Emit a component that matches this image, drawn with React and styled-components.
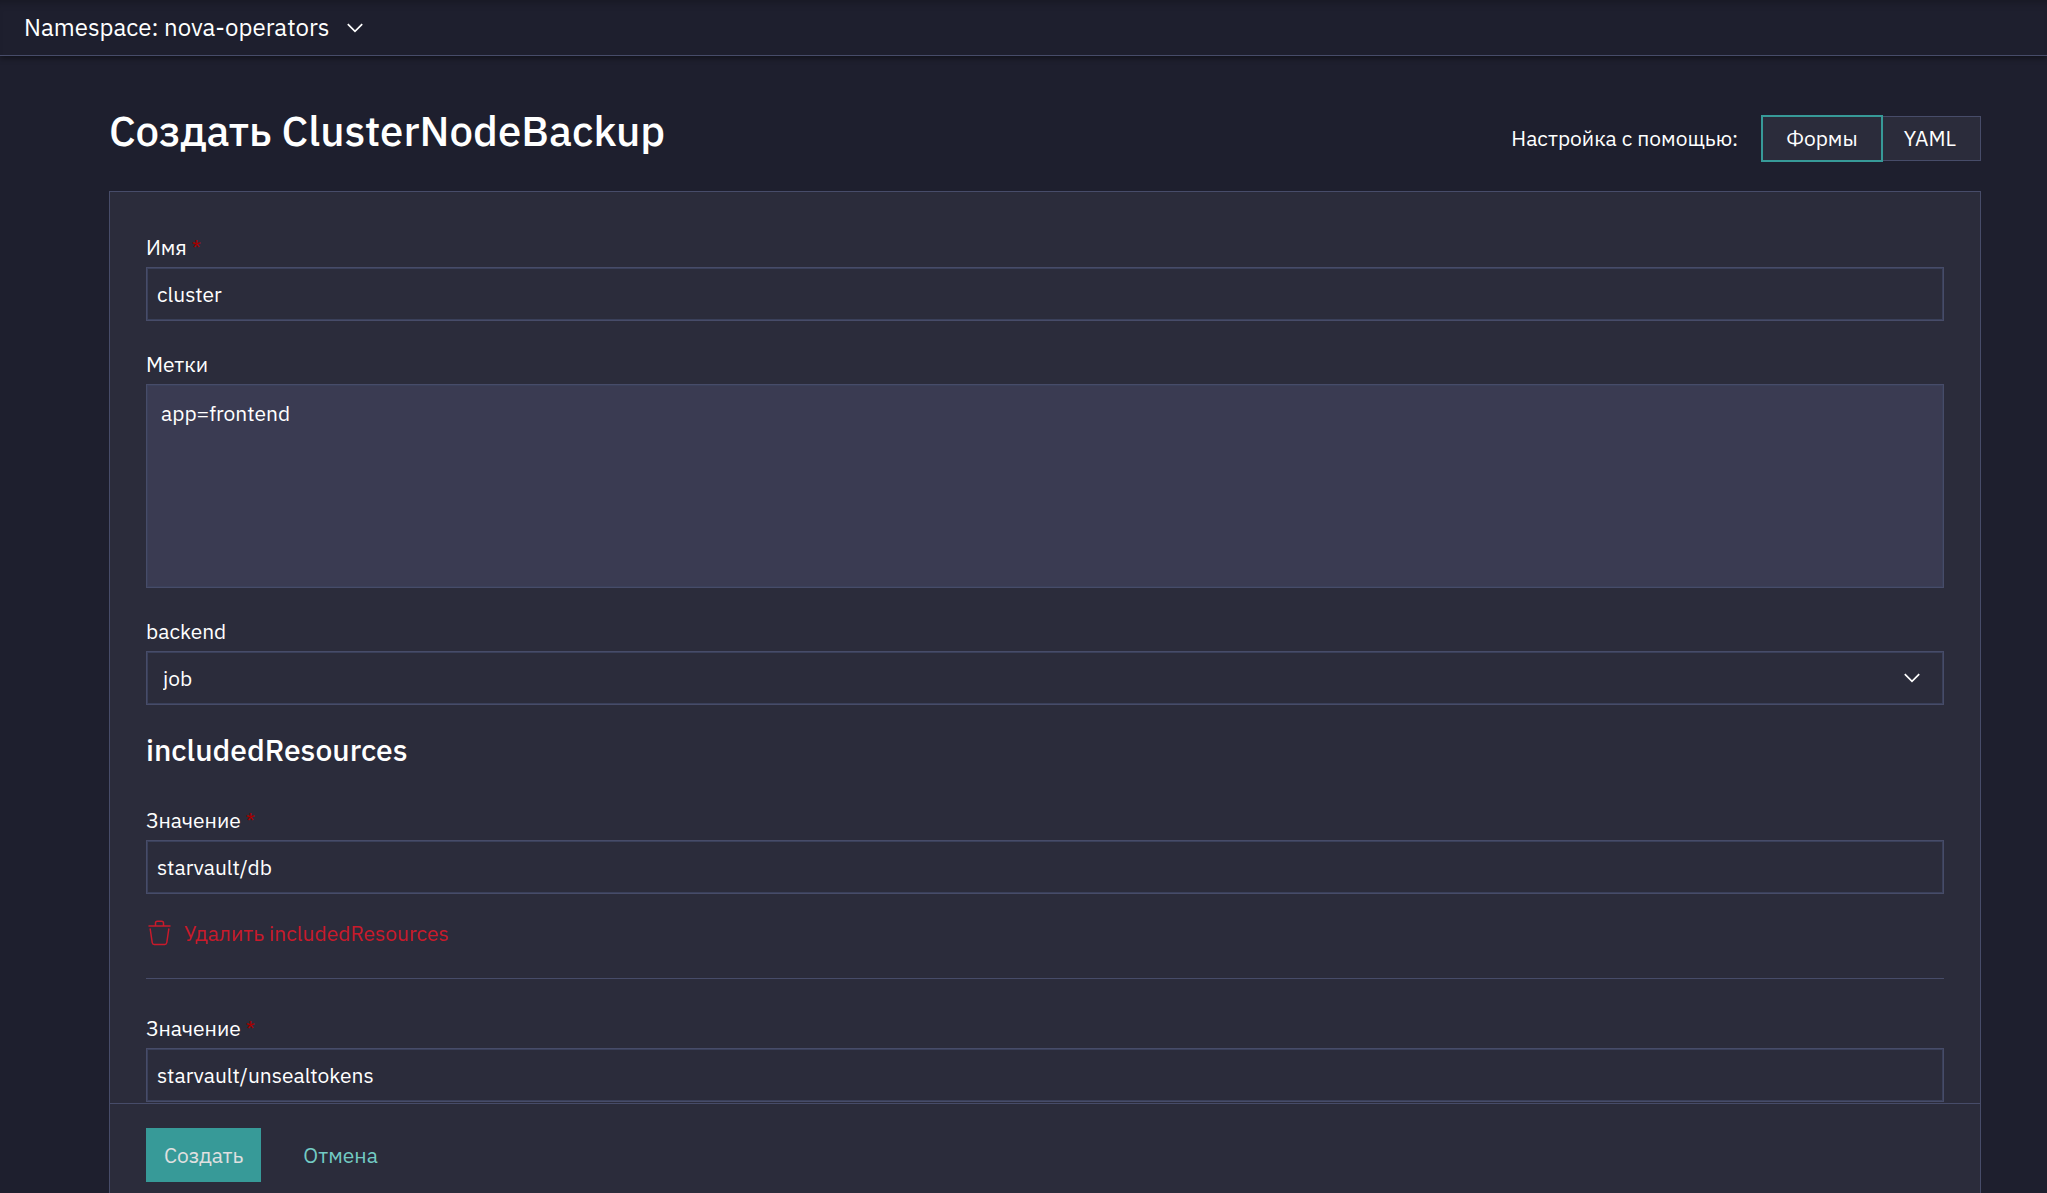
import React, { useState } from "react";
import styled, { createGlobalStyle } from "styled-components";

const color = {
  page: "#1e1f2e",
  panel: "#2b2c3b",
  field: "#3a3b52",
  border: "#474c69",
  text: "#ffffff",
  teal: "#379a98",
  link: "#73cbc4",
  danger: "#c91a2b",
  required: "#a30000",
};

const GlobalStyle = createGlobalStyle`
  *, *::before, *::after { box-sizing: border-box; }
  body {
    margin: 0;
    background: ${color.page};
    color: ${color.text};
    font: 400 21px/30px "IBM Plex Sans", Roboto, "Noto Sans", sans-serif;
  }
  button, input, select, textarea { font: inherit; color: inherit; margin: 0; border-radius: 0; }
`;

const Page = styled.div`
  display: flex;
  flex-direction: column;
  height: 100vh;
  overflow: hidden;
`;

const TopBar = styled.header`
  flex: none;
  display: flex;
  padding: 12px 24px 13px;
  border-bottom: 1px solid ${color.border};
  box-shadow: 0 2px 6px rgba(0, 0, 0, 0.45), inset 0 8px 8px -6px rgba(0, 0, 0, 0.25);
`;

const NamespaceButton = styled.button`
  display: flex;
  align-items: center;
  gap: 18px;
  padding: 0;
  border: 0;
  background: none;
  font-size: 24px;
  line-height: 30px;
  > svg { margin-top: 2px; }
`;

const Main = styled.main`
  flex: 1;
  min-height: 0;
  display: flex;
  flex-direction: column;
  padding: 48px 66px 0 109px;
`;

const TitleRow = styled.div`
  flex: none;
  display: flex;
  justify-content: space-between;
  align-items: flex-start;
  padding-bottom: 29px;
`;

const Title = styled.h1`
  margin: 0;
  font-size: 42px;
  line-height: 54px;
  font-weight: 500;
`;

const ModeSwitch = styled.div`
  display: flex;
  align-items: center;
  gap: 23px;
  padding-top: 11px;
`;

const ModeCaption = styled.span`
  padding-bottom: 2px;
`;

const ModeButtons = styled.div`
  display: flex;
  align-items: center;
`;

const ModeButton = styled.button`
  height: ${(p) => (p.$active ? 47 : 45)}px;
  padding: 0 ${(p) => (p.$active ? 23 : 24)}px 2px ${(p) => (p.$active ? 23 : 21)}px;
  background: ${color.panel};
  border: ${(p) => (p.$active ? `2px solid ${color.teal}` : `1px solid ${color.border}`)};
  ${(p) => !p.$active && "border-left: 0;"}
`;

const Panel = styled.form`
  flex: 1;
  min-height: 0;
  display: flex;
  flex-direction: column;
  background: ${color.panel};
  border: 1px solid ${color.border};
  border-bottom: 0;
`;

const Fields = styled.div`
  flex: 1;
  min-height: 0;
  overflow: hidden auto;
  padding: 40px 36px 0;
`;

const Field = styled.div`
  display: flex;
  flex-direction: column;
  gap: 5px;
  margin-bottom: ${(p) => (p.$last ? 0 : 28)}px;
`;

const Label = styled.label`
  align-self: flex-start;
`;

const Star = styled.span`
  color: ${color.required};
`;

const controlStyle = `
  width: 100%;
  background: transparent;
  border: 1px solid ${color.border};
  box-shadow: inset 0 0 0 1px #3a405a;
  outline: 0;
`;

const Input = styled.input`
  ${controlStyle}
  height: 54px;
  padding: 0 10px;
`;

const TextArea = styled.textarea`
  ${controlStyle}
  display: block;
  height: 204px;
  padding: 13px 14px;
  background: ${color.field};
  resize: none;
`;

const SelectBox = styled.div`
  display: grid;
  align-items: center;
  > * { grid-area: 1 / 1; }
  > svg { justify-self: end; margin-right: 24px; pointer-events: none; }
`;

const Select = styled.select`
  ${controlStyle}
  height: 54px;
  padding: 0 48px 0 16px;
  appearance: none;
  option { background: ${color.panel}; }
`;

const SectionTitle = styled.h2`
  margin: -4px 0 34px;
  font-size: 30px;
  line-height: 42px;
  font-weight: 500;
`;

const RemoveButton = styled.button`
  display: flex;
  align-items: center;
  gap: 13px;
  margin-top: -4px;
  padding: 0 2px;
  border: 0;
  background: none;
  color: ${color.danger};
`;

const Divider = styled.hr`
  height: 1px;
  margin: 30px 0 34px;
  border: 0;
  background: ${color.border};
`;

const Footer = styled.footer`
  flex: none;
  display: flex;
  gap: 24px;
  padding: 24px 36px 11px;
  border-top: 1px solid ${color.border};
`;

const Action = styled.button`
  height: 54px;
  padding: 0 18px;
  border: 0;
  background: ${(p) => (p.$primary ? color.teal : "none")};
  color: ${(p) => (p.$primary ? "#e0e0e0" : color.link)};
`;

const Chevron = () => (
  <svg width="16" height="10" viewBox="0 0 16 10" fill="none" stroke="currentColor" strokeWidth="1.7" aria-hidden="true">
    <path d="M0.8 1.2 8 8.4 15.2 1.2" />
  </svg>
);

const Trash = () => (
  <svg width="23" height="26" viewBox="0 0 23 26" fill="none" stroke="currentColor" strokeWidth="1.5" strokeLinecap="round" strokeLinejoin="round" aria-hidden="true">
    <path d="M1 6H22M7.5 6V3Q7.5 1.2 9.3 1.2H13.7Q15.5 1.2 15.5 3V6" />
    <path d="M2.2 9 4.2 22.5Q4.5 24.5 6.2 24.5H16.8Q18.5 24.5 18.8 22.5L20.8 9" />
  </svg>
);

function TextField({ id, label, initial, last }) {
  const [value, setValue] = useState(initial);
  return (
    <Field $last={last}>
      <Label htmlFor={id}>
        {label} <Star>*</Star>
      </Label>
      <Input id={id} type="text" required value={value} onChange={(e) => setValue(e.target.value)} />
    </Field>
  );
}

export default function App() {
  const [mode, setMode] = useState("form");
  return (
    <Page>
      <GlobalStyle />
      <TopBar>
        <NamespaceButton type="button">
          Namespace: nova-operators
          <Chevron />
        </NamespaceButton>
      </TopBar>
      <Main>
        <TitleRow>
          <Title>Создать ClusterNodeBackup</Title>
          <ModeSwitch>
            <ModeCaption>Настройка с помощью:</ModeCaption>
            <ModeButtons>
              <ModeButton type="button" $active={mode === "form"} onClick={() => setMode("form")}>Формы</ModeButton>
              <ModeButton type="button" $active={mode === "yaml"} onClick={() => setMode("yaml")}>YAML</ModeButton>
            </ModeButtons>
          </ModeSwitch>
        </TitleRow>
        <Panel onSubmit={(e) => e.preventDefault()}>
          <Fields>
            <TextField id="name" label="Имя" initial="cluster" />
            <Field>
              <Label htmlFor="labels">Метки</Label>
              <TextArea id="labels" defaultValue="app=frontend" />
            </Field>
            <Field>
              <Label htmlFor="backend">backend</Label>
              <SelectBox>
                <Select id="backend" defaultValue="job">
                  <option value="job">job</option>
                </Select>
                <Chevron />
              </SelectBox>
            </Field>
            <SectionTitle>includedResources</SectionTitle>
            <TextField id="resource-1" label="Значение" initial="starvault/db" />
            <RemoveButton type="button">
              <Trash />
              Удалить includedResources
            </RemoveButton>
            <Divider />
            <TextField id="resource-2" label="Значение" initial="starvault/unsealtokens" last />
          </Fields>
          <Footer>
            <Action type="submit" $primary>Создать</Action>
            <Action type="button">Отмена</Action>
          </Footer>
        </Panel>
      </Main>
    </Page>
  );
}
